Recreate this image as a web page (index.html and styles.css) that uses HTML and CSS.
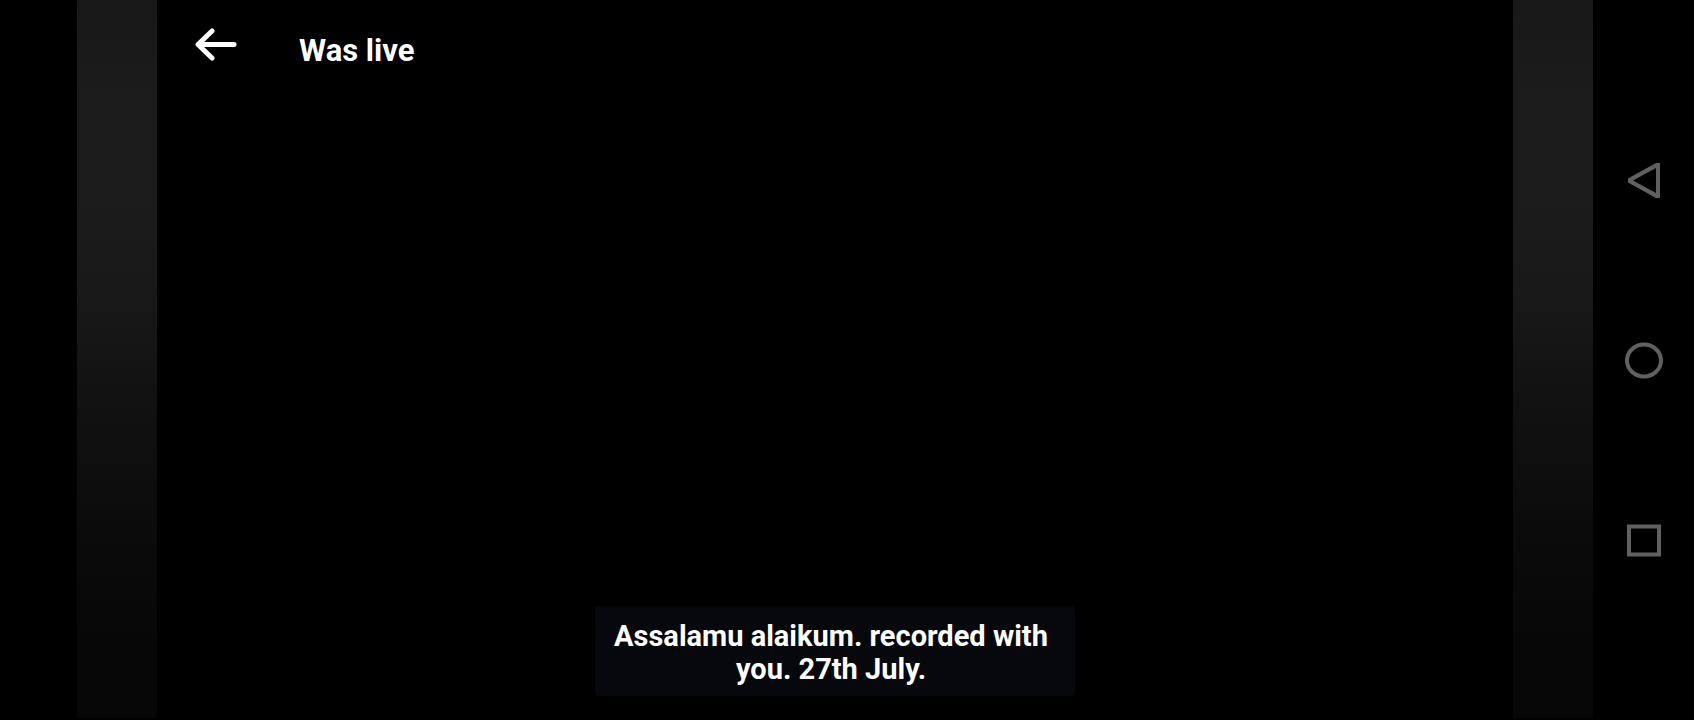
FILE: index.html
```html
<!DOCTYPE html>
<html lang="en">
<head>
  <meta charset="UTF-8" />
  <meta name="viewport" content="width=device-width, initial-scale=1.0"/>
  <title>Was live</title>
  <link rel="stylesheet" href="styles.css">
</head>
<body>
  <div class="player">
    <div class="side-strip"></div>

    <main class="video">
      <header class="video-header">
        <button class="back-btn" type="button" aria-label="Back">
          <svg width="42" height="34" viewBox="0 0 42 34" fill="none" stroke="#fff" stroke-width="5" stroke-linecap="round" stroke-linejoin="round">
            <path d="M17 3 L3 16.5 L17 30"/>
            <path d="M4 16.5 H39"/>
          </svg>
        </button>
        <h1 class="title">Was live</h1>
      </header>

      <p class="caption">Assalamu alaikum. recorded with<br>you. 27th July.</p>
    </main>

    <div class="side-strip"></div>
  </div>

  <nav class="system-nav">
    <button class="nav-btn" type="button" aria-label="Back">
      <svg width="40" height="40" viewBox="0 0 40 40" fill="#606060">
        <path fill-rule="evenodd" d="M36 3 V38 H32 L4 22.5 V18.5 L32 3 Z M32 8 L9 20.5 L32 33 Z"/>
      </svg>
    </button>
    <button class="nav-btn" type="button" aria-label="Home">
      <svg width="40" height="40" viewBox="0 0 40 40" fill="none" stroke="#606060" stroke-width="4">
        <ellipse cx="20" cy="20.5" rx="17" ry="16"/>
      </svg>
    </button>
    <button class="nav-btn" type="button" aria-label="Recent apps">
      <svg width="40" height="40" viewBox="0 0 40 40" fill="none" stroke="#606060" stroke-width="4">
        <rect x="5" y="6.5" width="30" height="28"/>
      </svg>
    </button>
  </nav>
</body>
</html>
```

FILE: styles.css
```css
body {
  margin: 0;
  min-height: 100vh;
  display: flex;
  background: #000;
  color: #fff;
  font-family: Roboto, Arial, sans-serif;
}

button {
  display: flex;
  padding: 0;
  border: none;
  background: none;
  cursor: pointer;
}

.player {
  flex: 1;
  display: flex;
  padding: 0 0 2px 77px;
}

.side-strip {
  flex: 0 0 80px;
  background: linear-gradient(#181818, #1c1c1c 14%, #1c1c1c 27%, #191919 40%, #121212 55%, #0b0b0b 74%, #070707 90%, #070707);
}

.video {
  flex: 1;
  display: flex;
  flex-direction: column;
  justify-content: space-between;
  align-items: center;
}

.video-header {
  align-self: stretch;
  display: flex;
  align-items: flex-start;
  gap: 62px;
  padding: 28px 38px 0;
}

.title {
  margin: 5px 0 0;
  font-size: 31px;
  line-height: 36px;
  font-weight: 700;
}

.caption {
  margin: 0 0 22px;
  padding: 14px 27px 10px 19px;
  border-radius: 4px;
  background: #07080c;
  font-size: 29px;
  line-height: 33px;
  font-weight: 700;
  text-align: center;
}

/* Android navigation bar */
.system-nav {
  flex: 0 0 101px;
  box-sizing: border-box;
  display: flex;
  flex-direction: column;
  justify-content: space-around;
  align-items: center;
  padding: 90px 0;
}
```
